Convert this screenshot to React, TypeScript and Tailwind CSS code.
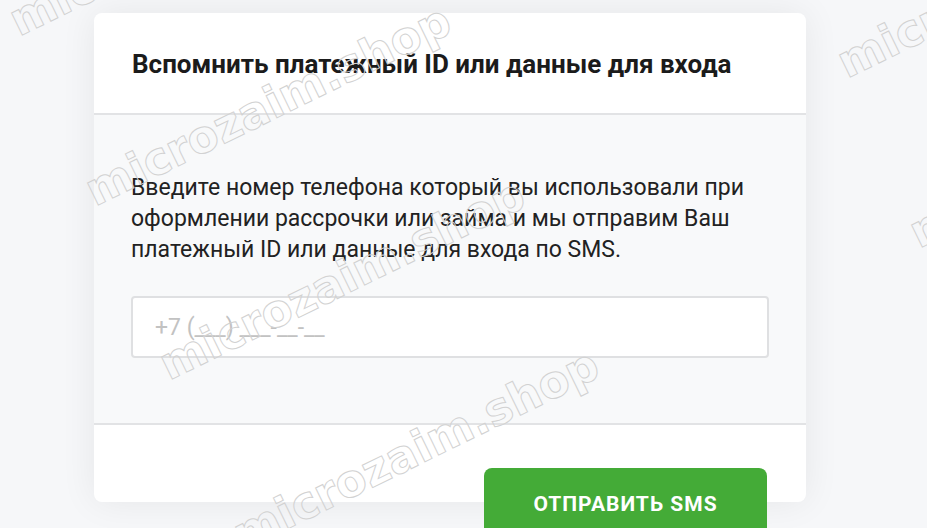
import React from 'react';

const marks = [
  { pos: 'left-[22px] top-[-2px]' },
  { pos: 'left-[98px] top-[168px]' },
  { pos: 'left-[172px] top-[342px]' },
  { pos: 'left-[246px] top-[512px]' },
  { pos: 'left-[850px] top-[40px]' },
  { pos: 'left-[922px] top-[210px]' },
];

function Watermark({ pos }: { pos: string }) {
  return (
    <span
      className={`absolute ${pos} origin-bottom-left -rotate-[26deg] whitespace-nowrap font-['DejaVu_Sans',sans-serif] text-[45px] font-bold leading-none text-transparent [-webkit-text-stroke:1px_#d2d2d2]`}
    >
      microzaim.shop
    </span>
  );
}

export default function App() {
  return (
    <div className="relative h-[528px] overflow-hidden bg-[#f6f7f9] pl-[94px] pt-[13px] font-['Roboto',sans-serif]">
      <div className="w-[712px] rounded-lg bg-white shadow-[0_0_36px_rgba(0,0,0,0.07)]">
        <div className="flex h-[100px] items-center rounded-t-lg px-[38px] pt-[2px]">
          <h1 className="text-[26px] font-bold text-[#1b1b1b]">Вспомнить платежный ID или данные для входа</h1>
        </div>

        <div className="border-y-2 border-[#e2e3e5] bg-[#f8f9fa] px-[37px] pb-[65px] pt-[57px]">
          <p className="text-[23px] leading-[31px] text-[#222]">
            Введите номер телефона который вы использовали при оформлении рассрочки или займа и мы отправим Ваш
            платежный ID или данные для входа по SMS.
          </p>
          <input
            type="tel"
            placeholder="+7 (___) ___-__-__"
            className="mt-[31px] h-[62px] w-full rounded border-2 border-[#dfe0e2] bg-white px-[22px] text-[23px] text-[#222] outline-none placeholder:text-[#c2c2c2]"
          />
        </div>

        <div className="flex h-[77px] items-start justify-end rounded-b-lg px-[39px] pt-[43px]">
          <button className="h-[74px] w-[283px] shrink-0 rounded-lg bg-[#44ab37] text-[21px] font-bold tracking-[1px] text-white">
            ОТПРАВИТЬ SMS
          </button>
        </div>
      </div>

      <div className="pointer-events-none absolute inset-0">
        {marks.map((m) => (
          <Watermark key={m.pos} pos={m.pos} />
        ))}
      </div>
    </div>
  );
}
